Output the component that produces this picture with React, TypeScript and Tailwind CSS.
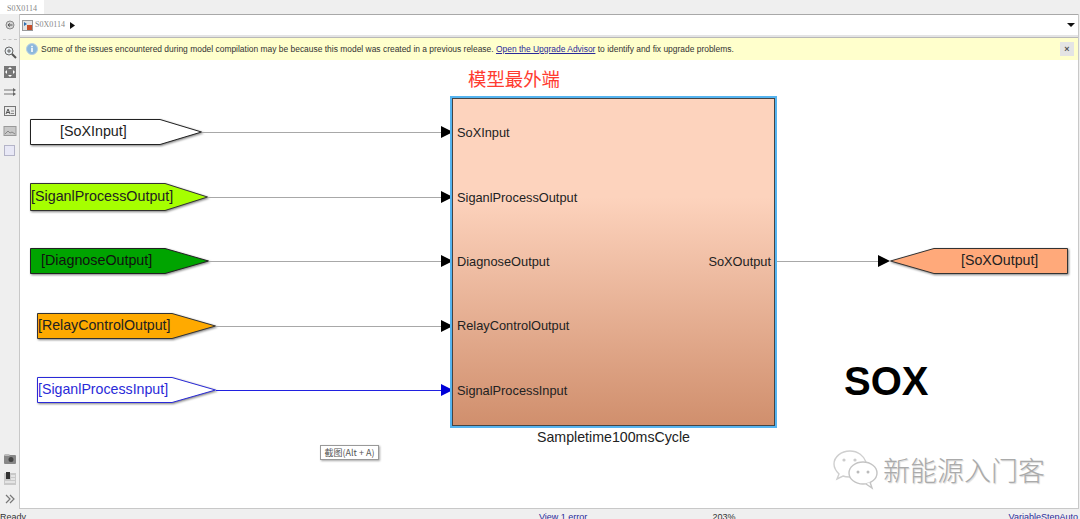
const sans = 'font-["Liberation_Sans",Arial,sans-serif]';

interface TagProps {
  pos: string;
  w: number;
  h: number;
  shoulder: number;
  fill: string;
  stroke: string;
  flip?: boolean;
  children: React.ReactNode;
}

function Tag({ pos, w, h, shoulder, fill, stroke, flip, children }: TagProps) {
  const points = flip
    ? `0.5,${h / 2} ${shoulder},0.5 ${w - 0.5},0.5 ${w - 0.5},${h - 0.5} ${shoulder},${h - 0.5}`
    : `0.5,0.5 ${shoulder},0.5 ${w - 0.5},${h / 2} ${shoulder},${h - 0.5} 0.5,${h - 0.5}`;
  return (
    <div className={`absolute ${pos}`}>
      <svg width={w} height={h} className="block overflow-visible drop-shadow-[1px_1px_1px_rgba(0,0,0,0.5)]">
        <polygon points={points} fill={fill} stroke={stroke} strokeWidth="1" />
      </svg>
      {children}
    </div>
  );
}

function Arrow({ pos, color = '#000' }: { pos: string; color?: string }) {
  return (
    <svg width="12" height="12" viewBox="0 0 12 12" className={`absolute ${pos}`}>
      <polygon points="0,0 12,6 0,12" fill={color} />
    </svg>
  );
}

function Wire({ pos, color = 'bg-[#a8a8a8]' }: { pos: string; color?: string }) {
  return <div className={`absolute h-px ${pos} ${color}`} />;
}

function Port({ pos, children }: { pos: string; children: React.ReactNode }) {
  return <span className={`absolute left-[4px] text-[12.8px] leading-[14px] text-[#222] ${pos}`}>{children}</span>;
}

function ToolIcon({ children }: { children: React.ReactNode }) {
  return (
    <svg width="14" height="14" viewBox="0 0 14 14" className="block">
      {children}
    </svg>
  );
}

function LeftToolbar() {
  return (
    <div className="flex w-[20px] shrink-0 flex-col items-center border-r border-[#c8c8c8] bg-[#efefef]">
      <div className="mt-[4px] h-[14px]">
        <ToolIcon>
          <circle cx="7" cy="7" r="4" fill="#d4d4d4" stroke="#8a8a8a" />
          <path d="M9.5 7H5.5M6.8 5.4L5 7l1.8 1.6" fill="none" stroke="#555" strokeWidth="1" />
        </ToolIcon>
      </div>
      <div className="mt-[7px] w-[14px] border-t border-dashed border-[#c4c4c4]" />
      <div className="mt-[5px] flex flex-col gap-[5.8px]">
        <ToolIcon>
          <circle cx="6" cy="6" r="4" fill="#e8eef2" stroke="#666" />
          <path d="M9 9l4 4" stroke="#555" strokeWidth="2" />
          <path d="M4 6h4M6 4v4" stroke="#666" />
        </ToolIcon>
        <ToolIcon>
          <rect x="1" y="1" width="12" height="12" fill="#777" />
          <path d="M7 2l2 2H5zM7 12l2-2H5zM2 7l2-2v4zM12 7l-2-2v4z" fill="#fff" />
        </ToolIcon>
        <ToolIcon>
          <path d="M1 5h10M1 9h10" stroke="#777" strokeWidth="1.2" />
          <path d="M10 3l3 2-3 2zM10 7l3 2-3 2z" fill="#666" />
        </ToolIcon>
        <ToolIcon>
          <rect x="1.5" y="2.5" width="11" height="9" fill="#e9e9e9" stroke="#777" />
          <path d="M3 10l2-5 2 5M4 8.5h2" fill="none" stroke="#555" />
          <path d="M8 7h3M8 9.5h3" stroke="#888" />
        </ToolIcon>
        <ToolIcon>
          <rect x="1" y="2.5" width="12" height="9" fill="#c8c8c8" stroke="#999" />
          <path d="M2 10l3-3 2 2 2-1 3 2" fill="none" stroke="#888" />
        </ToolIcon>
        <ToolIcon>
          <rect x="1.5" y="1.5" width="10" height="10" fill="#e8e8f6" stroke="#b4b4c8" />
        </ToolIcon>
      </div>
      <div className="mt-auto mb-[3px] flex flex-col items-center gap-[6px]">
        <ToolIcon>
          <rect x="1" y="3" width="12" height="9" rx="1" fill="#888" />
          <rect x="1.5" y="2" width="5" height="2" fill="#bbb" />
          <circle cx="8" cy="7.5" r="2.5" fill="#444" />
        </ToolIcon>
        <ToolIcon>
          <rect x="1" y="1" width="12" height="12" fill="#c9c9c9" />
          <rect x="3" y="0" width="4" height="7" fill="#333" />
          <path d="M8 4h4M8 7h4M2 10h10" stroke="#fff" />
        </ToolIcon>
        <ToolIcon>
          <path d="M3 3l4 4-4 4M7 3l4 4-4 4" fill="none" stroke="#777" strokeWidth="1.2" />
        </ToolIcon>
      </div>
    </div>
  );
}

function WeChatMark() {
  return (
    <svg width="46" height="40" viewBox="0 0 46 40" className="absolute left-[813px] top-[390px]">
      <path d="M17 1C8 1 1 7 1 14c0 4 2 7 5 10l-2 5 6-3c2 1 4 1 7 1" fill="#fff" stroke="#cfcfcf" strokeWidth="1.4" />
      <path d="M17 1c8 0 14 5 16 11" fill="none" stroke="#cfcfcf" strokeWidth="1.4" />
      <ellipse cx="30" cy="23" rx="14" ry="11" fill="#fff" stroke="#c4c4c4" strokeWidth="1.4" />
      <path d="M37 32l2 6-6-4" fill="#fff" stroke="#c4c4c4" strokeWidth="1.4" />
      <circle cx="11" cy="10" r="1.6" fill="#ccc" />
      <circle cx="22" cy="10" r="1.6" fill="#ccc" />
      <circle cx="25" cy="22" r="1.5" fill="#bbb" />
      <circle cx="35" cy="22" r="1.5" fill="#bbb" />
    </svg>
  );
}

export default function App() {
  return (
    <div className={`flex h-[519px] w-[1080px] flex-col overflow-hidden bg-[#efefef] ${sans}`}>
      {/* tab strip */}
      <div className="flex h-[14px] shrink-0">
        <div className='flex w-[44px] items-center justify-center bg-white pt-[3px] font-["Liberation_Serif",serif] text-[8px] leading-[10px] text-[#888]'>
          S0X0114
        </div>
      </div>

      <div className="flex min-h-0 flex-1">
        <LeftToolbar />
        <div className="mr-px flex min-w-0 flex-1 flex-col border-r border-b border-[#c8c8c8]">
          {/* address bar */}
          <div className="flex h-[23px] shrink-0 items-center border-t border-b-2 border-t-[#a8a8a8] border-b-[#e4e4e4] bg-white pl-[2px] pr-[3px]">
            <svg width="11" height="11" viewBox="0 0 11 11">
              <rect x="0.5" y="0.5" width="10" height="10" fill="#e4e4e4" stroke="#999" />
              <path d="M2 2l3 2-3 2z" fill="#2f6fb0" />
              <rect x="5" y="5" width="5" height="5" fill="#c8502a" />
            </svg>
            <span className='ml-[2px] font-["Liberation_Serif",serif] text-[8px] text-[#888]'>S0X0114</span>
            <svg width="5" height="7" viewBox="0 0 5 7" className="ml-[5px]">
              <path d="M0 0l5 3.5L0 7z" fill="#111" />
            </svg>
            <svg width="8" height="4" viewBox="0 0 8 4" className="ml-auto">
              <path d="M0 0h8L4 4z" fill="#111" />
            </svg>
          </div>

          {/* upgrade banner */}
          <div className="flex h-[23px] shrink-0 items-center border-t border-[#b8b8b8] bg-[#ffffcc] pl-[6px] pr-[4px] text-[8.45px] text-[#333]">
            <svg width="12" height="12" viewBox="0 0 12 12" className="mr-[3px] shrink-0">
              <circle cx="6" cy="6" r="5.5" fill="#8db8dc" stroke="#b6cfe2" />
              <rect x="5.2" y="5" width="1.6" height="4" fill="#fff" />
              <rect x="5.2" y="2.8" width="1.6" height="1.5" fill="#fff" />
            </svg>
            <span>
              Some of the issues encountered during model compilation may be because this model was created in a previous
              release.{' '}
              <span className="text-[#2a2a9a] underline">Open the Upgrade Advisor</span> to identify and fix upgrade
              problems.
            </span>
            <div className="ml-auto flex h-[14px] w-[14px] items-center justify-center bg-[#e4e4e4] text-[9px] font-bold leading-none text-[#555]">
              ×
            </div>
          </div>

          {/* model canvas, origin at page x=20 y=60 */}
          <div className="relative min-h-0 flex-1 bg-white">
            <Tag pos="left-[10px] top-[59px]" w={172} h={26} shoulder={130} fill="#fff" stroke="#222">
              <span className="absolute left-[30px] top-[4px] text-[14.3px] leading-[16px] text-[#222]">[SoXInput]</span>
            </Tag>
            <Wire pos="left-[182px] top-[72px] w-[240px]" />
            <Arrow pos="left-[421px] top-[66px]" />

            <Tag pos="left-[10px] top-[123px]" w={178} h={28} shoulder={135} fill="#a6ff00" stroke="#333">
              <span className="absolute left-[1px] top-[5px] text-[14.3px] leading-[16px] text-[#222]">[SiganlProcessOutput]</span>
            </Tag>
            <Wire pos="left-[188px] top-[137px] w-[234px]" />
            <Arrow pos="left-[421px] top-[131px]" />

            <Tag pos="left-[10px] top-[188px]" w={179} h={26} shoulder={135} fill="#00a400" stroke="#222">
              <span className="absolute left-[11px] top-[4px] text-[14.3px] leading-[16px] text-[#111]">[DiagnoseOutput]</span>
            </Tag>
            <Wire pos="left-[189px] top-[201px] w-[233px]" />
            <Arrow pos="left-[421px] top-[195px]" />

            <Tag pos="left-[17px] top-[253px]" w={179} h={26} shoulder={135} fill="#ffaa00" stroke="#333">
              <span className="absolute left-[1px] top-[4px] text-[14.2px] leading-[16px] text-[#222]">[RelayControlOutput]</span>
            </Tag>
            <Wire pos="left-[196px] top-[266px] w-[226px]" />
            <Arrow pos="left-[421px] top-[260px]" />

            <Tag pos="left-[17px] top-[317px]" w={179} h={26} shoulder={135} fill="#fff" stroke="#2a2ad8">
              <span className="absolute left-[1px] top-[4px] text-[14.2px] leading-[16px] text-[#2a2ad8]">[SiganlProcessInput]</span>
            </Tag>
            <Wire pos="left-[196px] top-[330px] w-[226px]" color="bg-[#2020e0]" />
            <Arrow pos="left-[421px] top-[324px]" color="#0000d8" />

            {/* subsystem block */}
            <span className='absolute left-[448px] top-[6px] font-["Noto_Sans_CJK_SC",sans-serif] text-[18.4px] leading-[24px] text-[#ff3b30]'>
              模型最外端
            </span>
            <div className="absolute left-[430px] top-[36px] h-[332px] w-[327px] border-2 border-[#55b4f0]">
              <div className="relative h-full w-full border border-[#444] bg-gradient-to-b from-[#fdd3bd] from-30% to-[#d08f6d]">
                <Port pos="top-[27px]">SoXInput</Port>
                <Port pos="top-[92px]">SiganlProcessOutput</Port>
                <Port pos="top-[156px]">DiagnoseOutput</Port>
                <Port pos="top-[220px]">RelayControlOutput</Port>
                <Port pos="top-[285px]">SignalProcessInput</Port>
                <span className="absolute right-[3px] top-[156px] text-[12.8px] leading-[14px] text-[#222]">SoXOutput</span>
              </div>
            </div>
            <span className="absolute left-[517px] top-[369px] text-[14.2px] leading-[16px] text-[#222]">Sampletime100msCycle</span>

            <Wire pos="left-[757px] top-[201px] w-[103px]" />
            <Arrow pos="left-[858px] top-[195px]" />
            <Tag pos="left-[870px] top-[188px]" w={178} h={26} shoulder={44} fill="#ffa97a" stroke="#333" flip>
              <span className="absolute left-[71px] top-[4px] text-[14.2px] leading-[16px] text-[#222]">[SoXOutput]</span>
            </Tag>

            <span className="absolute left-[824px] top-[298px] text-[40px] font-bold leading-[46px] text-black">SOX</span>

            {/* screenshot tool tooltip */}
            <div className='absolute left-[300px] top-[385px] flex h-[15px] w-[59px] items-center justify-center border border-[#999] bg-white font-["Noto_Sans_CJK_SC",sans-serif] text-[9px] text-[#555] shadow-[1px_1px_2px_rgba(0,0,0,0.35)]'>
              截图(Alt + A)
            </div>

            {/* watermark */}
            <WeChatMark />
            <span className='absolute left-[863px] top-[391px] font-["Noto_Sans_CJK_SC",sans-serif] text-[27px] font-light leading-[38px] text-[#aaaaaa] [text-shadow:1px_1px_1px_#d8d8d8]'>
              新能源入门客
            </span>
          </div>
        </div>
      </div>

      {/* status bar */}
      <div className="relative flex h-[10px] shrink-0 text-[9px] leading-[11px] text-[#333]">
        <span className="pt-[3px]">Ready</span>
        <span className="ml-[513px] pt-[3px] text-[#2a2a9a]">View 1 error</span>
        <span className="ml-[125px] pt-[3px]">203%</span>
        <span className="ml-auto pt-[3px] pr-[2px] text-[#2a2a9a]">VariableStepAuto</span>
      </div>
    </div>
  );
}
